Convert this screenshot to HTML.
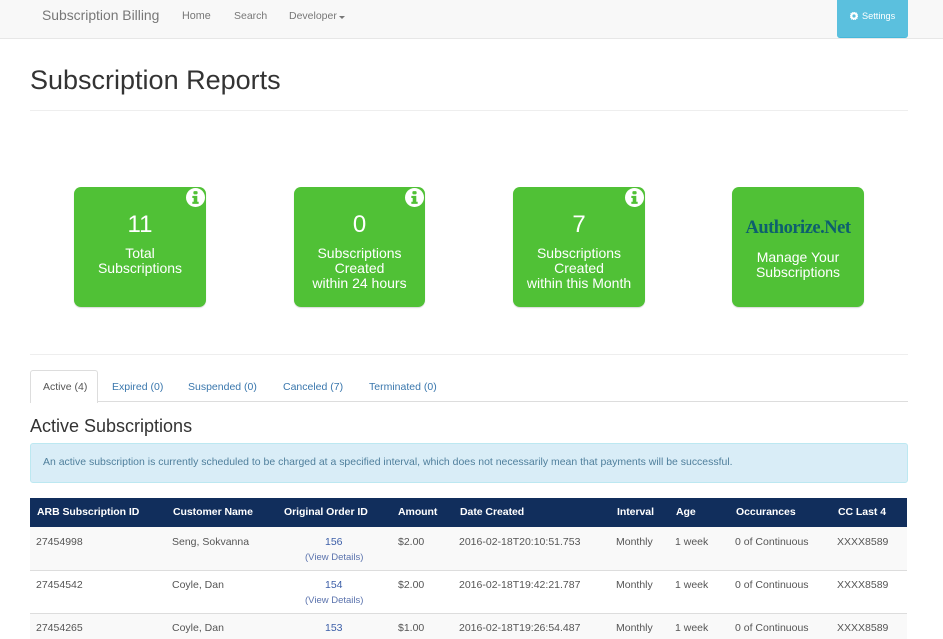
<!DOCTYPE html>
<html><head><meta charset="utf-8"><style>
html,body{margin:0;padding:0;background:#fff;width:943px;height:639px;overflow:hidden;position:relative;font-family:"Liberation Sans",sans-serif;}
.a{position:absolute;white-space:nowrap;line-height:1;}
.hr{position:absolute;height:1px;background:#eee;left:30px;width:878px;}
.card{position:absolute;top:187px;height:120px;background:#50c136;border-radius:7px;box-shadow:0 1px 1px rgba(0,0,0,.15);color:#fff;text-align:center;font-size:14px;line-height:15px;}
.card .n{position:absolute;left:0;right:0;top:25px;font-size:24px;line-height:26px;}
.card .t{position:absolute;left:0;right:0;top:59px;}
.i{position:absolute;top:1px;right:1px;width:19px;height:19px;}
.tab{position:absolute;top:381px;font-size:10.5px;line-height:12px;color:#3a77ad;white-space:nowrap;}
.th{position:absolute;top:506px;font-size:10.5px;line-height:12px;font-weight:bold;color:#fff;white-space:nowrap;letter-spacing:-.05px;}
.td{position:absolute;font-size:10.5px;line-height:12px;color:#555;white-space:nowrap;}
.lnk{color:#3d5fa8;}
.vd{font-size:9.500px;color:#5b73ad;}
</style></head><body>
<div style="position:absolute;left:0;top:0;width:943px;height:38px;background:#f8f8f8;border-bottom:1px solid #e7e7e7"></div>
<div class="a" style="left:42px;top:9px;font-size:13.900px;color:#777">Subscription Billing</div>
<div class="a" style="left:182px;top:11px;font-size:10.800px;color:#777">Home</div>
<div class="a" style="left:234px;top:11px;font-size:10.500px;color:#777">Search</div>
<div class="a" style="left:289px;top:11px;font-size:10.500px;color:#777">Developer</div>
<div style="position:absolute;left:339px;top:16px;width:0;height:0;border-left:3px solid transparent;border-right:3px solid transparent;border-top:3px solid #777"></div>
<div style="position:absolute;left:837px;top:0;width:71px;height:37px;background:#5bc0de;border-radius:0 0 3px 3px;border-bottom:1px solid #46b8da"></div>
<svg style="position:absolute;left:850px;top:12px" width="8" height="8" viewBox="0 0 8 8"><circle cx="4" cy="4" r="2.600" fill="none" stroke="#fff" stroke-width="2"/><circle cx="4" cy="4" r="3.900" fill="none" stroke="#fff" stroke-width=".9" stroke-dasharray="1.2 0.85"/></svg>
<div class="a" style="left:862px;top:12px;font-size:9.200px;color:#fff">Settings</div>

<div class="a" style="left:30px;top:65px;font-size:27px;line-height:30px;color:#333">Subscription Reports</div>
<div class="hr" style="top:110px"></div>

<div class="card" style="left:74px;width:132px"><div class="n">11</div><div class="t">Total<br>Subscriptions</div>
<svg class="i" viewBox="0 0 18 18"><circle cx="9" cy="9" r="9" fill="#fff"/><rect x="7" y="3" width="4" height="3" rx="1" fill="#50c136"/><path d="M6 7.500h4.700v5.500h1.300v2H6v-2h1.300V9.500H6z" fill="#50c136"/></svg></div>
<div class="card" style="left:294px;width:131px"><div class="n">0</div><div class="t">Subscriptions<br>Created<br>within 24 hours</div>
<svg class="i" viewBox="0 0 18 18"><circle cx="9" cy="9" r="9" fill="#fff"/><rect x="7" y="3" width="4" height="3" rx="1" fill="#50c136"/><path d="M6 7.500h4.700v5.500h1.300v2H6v-2h1.300V9.500H6z" fill="#50c136"/></svg></div>
<div class="card" style="left:513px;width:132px"><div class="n">7</div><div class="t">Subscriptions<br>Created<br>within this Month</div>
<svg class="i" viewBox="0 0 18 18"><circle cx="9" cy="9" r="9" fill="#fff"/><rect x="7" y="3" width="4" height="3" rx="1" fill="#50c136"/><path d="M6 7.500h4.700v5.500h1.300v2H6v-2h1.300V9.500H6z" fill="#50c136"/></svg></div>
<div class="card" style="left:732px;width:132px"><div style="position:absolute;left:0;right:0;top:31px;font-family:'Liberation Serif',serif;font-weight:bold;font-size:18.500px;line-height:20px;color:#0d5f6e;letter-spacing:-.5px">Authorize.Net</div><div class="t" style="top:63px">Manage Your<br>Subscriptions</div></div>

<div class="hr" style="top:354px"></div>

<div style="position:absolute;left:30px;top:401px;width:878px;height:1px;background:#ddd"></div>
<div style="position:absolute;left:30px;top:370px;width:66px;height:32px;background:#fff;border:1px solid #ddd;border-bottom:0;border-radius:3px 3px 0 0"></div>
<div class="tab" style="left:43px;color:#555">Active (4)</div>
<div class="tab" style="left:112px">Expired (0)</div>
<div class="tab" style="left:188px">Suspended (0)</div>
<div class="tab" style="left:283px">Canceled (7)</div>
<div class="tab" style="left:369px">Terminated (0)</div>

<div class="a" style="left:30px;top:417px;font-size:18px;line-height:18px;color:#333">Active Subscriptions</div>

<div style="position:absolute;left:30px;top:443px;width:876px;height:38px;background:#d9edf7;border:1px solid #bce8f1;border-radius:3px"></div>
<div class="a" style="left:43px;top:457px;font-size:10.470px;line-height:12px;color:#4f7f9c">An active subscription is currently scheduled to be charged at a specified interval, which does not necessarily mean that payments will be successful.</div>

<div style="position:absolute;left:30px;top:498px;width:877px;height:29px;background:#112e5c"></div>
<div class="th" style="left:37px">ARB Subscription ID</div>
<div class="th" style="left:173px">Customer Name</div>
<div class="th" style="left:284px">Original Order ID</div>
<div class="th" style="left:398px">Amount</div>
<div class="th" style="left:460px">Date Created</div>
<div class="th" style="left:617px">Interval</div>
<div class="th" style="left:676px">Age</div>
<div class="th" style="left:736px">Occurances</div>
<div class="th" style="left:838px">CC Last 4</div>

<div style="position:absolute;left:30px;top:527px;width:877px;height:43px;background:#f9f9f9;border-bottom:1px solid #ddd"></div>
<div style="position:absolute;left:30px;top:613px;width:877px;height:26px;background:#f9f9f9;border-top:1px solid #ddd"></div>

<div class="td" style="left:36px;top:536px">27454998</div>
<div class="td" style="left:172px;top:536px">Seng, Sokvanna</div>
<div class="td lnk" style="left:325px;top:536px">156</div>
<div class="td vd" style="left:305px;top:552px">(View Details)</div>
<div class="td" style="left:398px;top:536px">$2.00</div>
<div class="td" style="left:459px;top:536px">2016-02-18T20:10:51.753</div>
<div class="td" style="left:616px;top:536px">Monthly</div>
<div class="td" style="left:675px;top:536px">1 week</div>
<div class="td" style="left:735px;top:536px">0 of Continuous</div>
<div class="td" style="left:837px;top:536px">XXXX8589</div>

<div class="td" style="left:36px;top:579px">27454542</div>
<div class="td" style="left:172px;top:579px">Coyle, Dan</div>
<div class="td lnk" style="left:325px;top:579px">154</div>
<div class="td vd" style="left:305px;top:595px">(View Details)</div>
<div class="td" style="left:398px;top:579px">$2.00</div>
<div class="td" style="left:459px;top:579px">2016-02-18T19:42:21.787</div>
<div class="td" style="left:616px;top:579px">Monthly</div>
<div class="td" style="left:675px;top:579px">1 week</div>
<div class="td" style="left:735px;top:579px">0 of Continuous</div>
<div class="td" style="left:837px;top:579px">XXXX8589</div>

<div class="td" style="left:36px;top:622px">27454265</div>
<div class="td" style="left:172px;top:622px">Coyle, Dan</div>
<div class="td lnk" style="left:325px;top:622px">153</div>
<div class="td" style="left:398px;top:622px">$1.00</div>
<div class="td" style="left:459px;top:622px">2016-02-18T19:26:54.487</div>
<div class="td" style="left:616px;top:622px">Monthly</div>
<div class="td" style="left:675px;top:622px">1 week</div>
<div class="td" style="left:735px;top:622px">0 of Continuous</div>
<div class="td" style="left:837px;top:622px">XXXX8589</div>
</body></html>
